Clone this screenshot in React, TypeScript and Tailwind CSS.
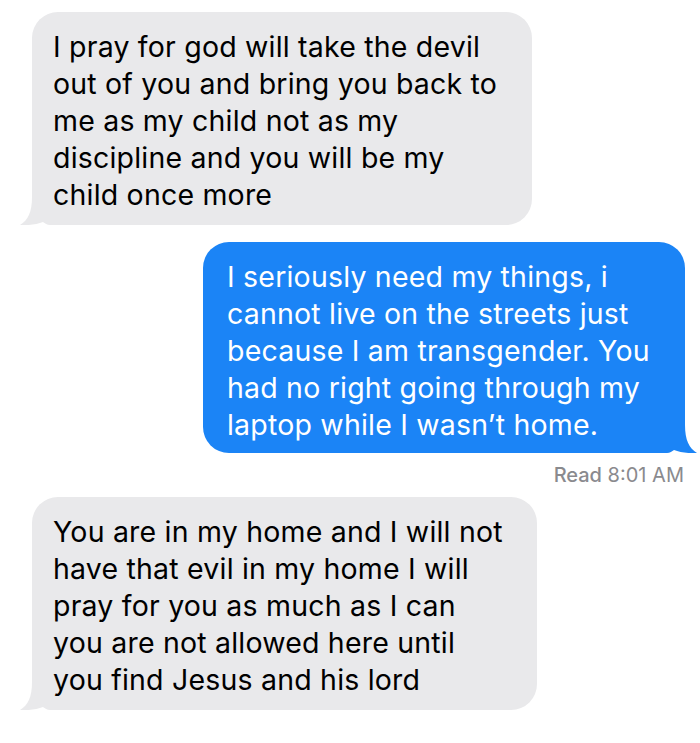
import React from "react";

const font = { fontFamily: "Inter, 'Liberation Sans', sans-serif" };

function Tail({ color, side }: { color: string; side: "left" | "right" }) {
  return (
    <svg
      width="40"
      height="28"
      viewBox="0 0 40 28"
      className={`absolute bottom-0 ${side === "left" ? "left-[-12px]" : "right-[-12px] scale-x-[-1]"}`}
    >
      <path
        d="M12 0 L40 0 L40 28 L30 28 C27 28 25 26.5 23 25 C17 27.5 9 28.5 0 28 C8 23 12 15 12 0 Z"
        fill={color}
      />
    </svg>
  );
}

function Bubble({
  lines,
  mine,
  className,
}: {
  lines: string[];
  mine?: boolean;
  className?: string;
}) {
  return (
    <div
      className={`relative rounded-[26px] pt-[16px] pb-[15px] pl-[21px] pr-4 text-[28.5px] leading-[37px] tracking-[0.2px] ${
        mine ? "bg-[#1b84f6] text-white" : "bg-[#e9e9eb] text-black"
      } ${className ?? ""}`}
    >
      {lines.map((l, i) => (
        <div key={i} className="relative z-10 whitespace-nowrap">
          {l}
        </div>
      ))}
      <Tail color={mine ? "#1b84f6" : "#e9e9eb"} side={mine ? "right" : "left"} />
    </div>
  );
}

export default function App() {
  return (
    <div className="w-[700px] h-[743px] bg-white overflow-hidden" style={font}>
      <div className="flex flex-col pt-[12px]">
        <Bubble
          className="ml-[32px] w-[500px] h-[213px]"
          lines={[
            "I pray for god will take the devil",
            "out of you and bring you back to",
            "me as my child not as my",
            "discipline and you will be my",
            "child once more",
          ]}
        />
        <Bubble
          mine
          className="self-end mr-[15px] mt-[17px] w-[482px] h-[211px] pt-[14px] pl-[24px]"
          lines={[
            "I seriously need my things, i",
            "cannot live on the streets just",
            "because I am transgender. You",
            "had no right going through my",
            "laptop while I wasn’t home.",
          ]}
        />
        <div className="self-end mr-[16px] mt-[6px] text-[20px] leading-[32px] text-[#8a8a8e]">
          <span className="font-medium">Read</span> 8:01 AM
        </div>
        <Bubble
          className="ml-[32px] mt-[6px] w-[505px] h-[213px]"
          lines={[
            "You are in my home and I will not",
            "have that evil in my home I will",
            "pray for you as much as I can",
            "you are not allowed here until",
            "you find Jesus and his lord",
          ]}
        />
      </div>
    </div>
  );
}
